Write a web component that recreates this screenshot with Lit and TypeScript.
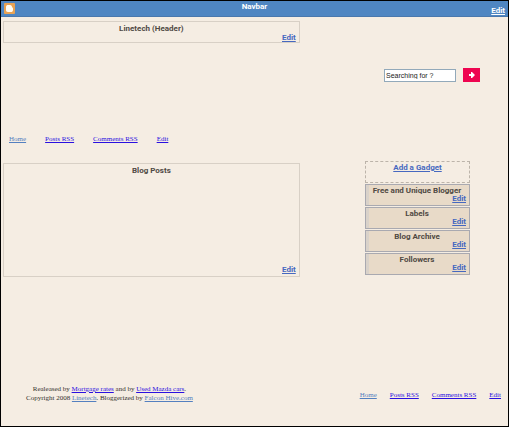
import { LitElement, html, css, svg } from "lit";
import { customElement } from "lit/decorators.js";

const links = ["Home", "Posts RSS", "Comments RSS", "Edit"];
const gadgets = ["Free and Unique Blogger", "Labels", "Blog Archive", "Followers"];

const bloggerIcon = svg`
  <svg class="logo" viewBox="0 0 22 22" aria-hidden="true">
    <rect width="22" height="22" rx="2" fill="#e9a355" />
    <path d="M8 4h4c3 0 4 2 4 4 0 1 2 1 2 3v3c0 3-2 4-4 4H8c-3 0-4-2-4-4V8c0-3 2-4 4-4z" fill="#fffdf5" />
  </svg>`;

@customElement("app-root")
export class AppRoot extends LitElement {
  static styles = css`
    :host {
      display: block;
      font: 7px/9px "Liberation Serif", "Times New Roman", serif;
      color: #33302d;
    }
    * {
      box-sizing: border-box;
    }
    a {
      color: #2a10e0;
    }
    h2 {
      margin: 0;
      font-size: inherit;
      text-align: center;
    }
    .page {
      display: flex;
      flex-direction: column;
      min-height: 100vh;
      border: 1px solid #000;
      background: #f5ede3;
    }
    .navbar,
    .box,
    .gadget,
    .add {
      font: bold 8px/9px Roboto, "Liberation Sans", Arial, sans-serif;
    }
    .navbar {
      display: grid;
      grid-template-columns: 1fr auto 1fr;
      height: 16px;
      padding: 0 3px;
      background: #4f86c2;
      border-bottom: 1px solid #4a78ad;
      color: #fff;
    }
    .navbar h2 {
      padding-top: 1px;
    }
    .navbar a {
      color: #fff;
      justify-self: end;
      align-self: end;
      margin-bottom: 1px;
    }
    .logo {
      width: 11px;
      height: 11px;
      margin: 2px 0 0;
    }
    .row {
      display: grid;
      grid-template-columns: minmax(0, 59fr) minmax(0, 41fr);
    }
    .row.top {
      padding: 4px 2px 0;
      height: 118px;
    }
    .row.main {
      padding: 0 2px;
      margin-top: 17px;
    }
    .box {
      display: flex;
      flex-direction: column;
      justify-content: space-between;
      border: 1px solid #d8d0c6;
      padding: 2px 3px;
      color: #4f4943;
    }
    .box a,
    .gadget a,
    .add a {
      color: #4668c0;
    }
    .box a {
      align-self: flex-end;
    }
    .head {
      height: 22px;
    }
    .posts {
      height: 114px;
      margin-top: 2px;
    }
    .search {
      display: flex;
      gap: 7px;
      justify-content: flex-end;
      align-items: flex-start;
      padding: 47px 26px 0 0;
    }
    .search input {
      width: 72px;
      height: 13px;
      margin-top: 1px;
      padding: 0 1px;
      border: 1px solid #92a9ba;
      border-radius: 0;
      background: #fff;
      color: #222;
      font: 7px/9px "Liberation Sans", Arial, sans-serif;
    }
    .search button {
      display: grid;
      place-items: center;
      width: 17px;
      height: 14px;
      padding: 0;
      border: 0;
      background: #ee0550;
    }
    .arrow {
      width: 6px;
      height: 6px;
    }
    .links {
      display: flex;
      gap: 19px;
      padding: 0 8px;
    }
    .links a:first-child,
    .credits a.soft {
      color: #5480c0;
    }
    .side {
      display: flex;
      flex-direction: column;
      gap: 1px;
      width: 105px;
      justify-self: end;
      margin-right: 36px;
    }
    .add {
      height: 22px;
      padding-top: 1px;
      border: 1px dashed #bcb4aa;
      text-align: center;
    }
    .gadget {
      display: flex;
      flex-direction: column;
      height: 22px;
      padding: 2px 3px 0 2px;
      border: 1px solid #a9a9b0;
      background: linear-gradient(90deg, #d9d2ca 3px, #e8dac8 3px);
      color: #4f4943;
      line-height: 8px;
    }
    .gadget a {
      align-self: flex-end;
    }
    footer {
      display: flex;
      justify-content: space-between;
      align-items: flex-start;
      margin-top: 108px;
      padding-left: 25px;
    }
    .credits {
      margin: 0;
      text-align: center;
    }
    footer .links {
      gap: 13px;
      padding: 6px 7px 0 0;
    }
  `;

  private nav(label: string) {
    return html`<nav class="links" aria-label=${label}>
      ${links.map((l) => html`<a href="#">${l}</a>`)}
    </nav>`;
  }

  render() {
    return html`
      <div class="page">
        <header class="navbar">
          ${bloggerIcon}
          <h2>Navbar</h2>
          <a href="#">Edit</a>
        </header>
        <div class="row top">
          <section class="box head"><h2>Linetech (Header)</h2><a href="#">Edit</a></section>
          <form class="search" @submit=${(e: Event) => e.preventDefault()}>
            <input type="text" aria-label="Search" value="Searching for ?" />
            <button type="submit" aria-label="Search">
              <svg class="arrow" viewBox="0 0 6 6" aria-hidden="true">
                <path d="M0 2h2V0h1l3 3-3 3H2V4H0z" fill="#fff" />
              </svg>
            </button>
          </form>
        </div>
        ${this.nav("Top links")}
        <main class="row main">
          <section class="box posts"><h2>Blog Posts</h2><a href="#">Edit</a></section>
          <aside class="side">
            <div class="add"><a href="#">Add a Gadget</a></div>
            ${gadgets.map((g) => html`<section class="gadget"><h2>${g}</h2><a href="#">Edit</a></section>`)}
          </aside>
        </main>
        <footer>
          <p class="credits">
            Realeased by <a href="#">Mortgage rates</a> and by <a href="#">Used Mazda cars</a>.<br />
            Copyright 2008 <a class="soft" href="#">Linetech</a>. Bloggerized by
            <a class="soft" href="#">Falcon Hive.com</a>
          </p>
          ${this.nav("Bottom links")}
        </footer>
      </div>
    `;
  }
}
